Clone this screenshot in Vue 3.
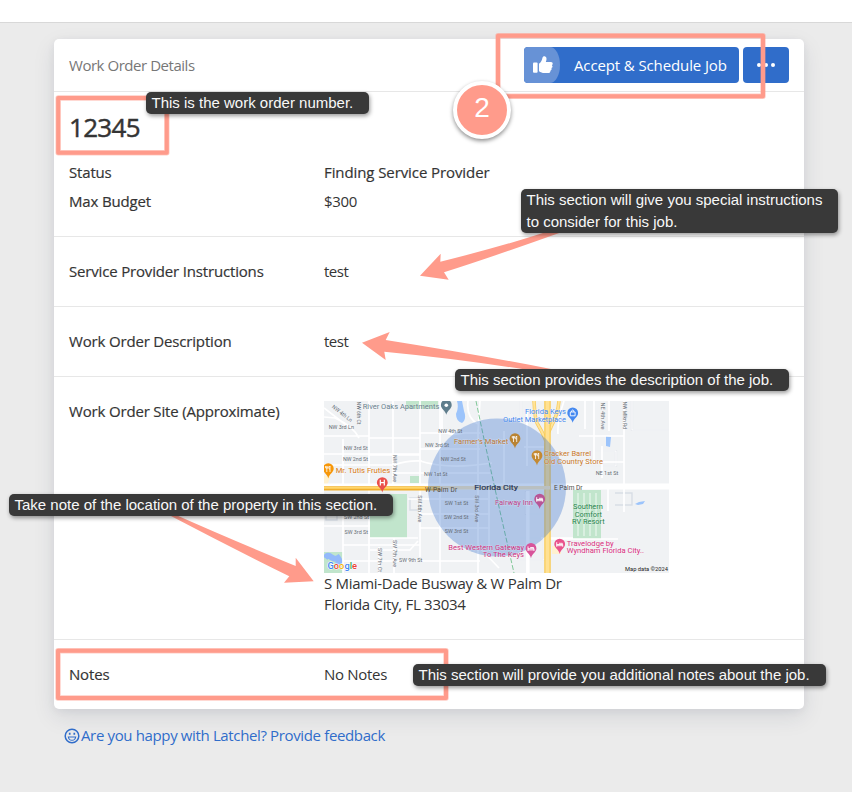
<script setup>
const details = [
  { label: 'Status', value: 'Finding Service Provider', strong: true },
  { label: 'Max Budget', value: '$300', strong: false },
]

const streets = [
  ['NW 3rd Ln', 4.7, 28.3, 25.3], ['NW 4th St', 114.3, 32, 24], ['NW 3rd St', 19.7, 49.3, 24],
  ['NW 2nd St', 19, 60, 25], ['NW 3rd St', 101, 46, 24], ['NW 2nd St', 116.7, 60.3, 25],
  ['NW 1st St', 100, 74.7, 23.5], ['NE 1st St', 271.7, 73.7, 22.5], ['SW 1st St', 120.7, 103.7, 23.5],
  ['SW 2nd St', 120, 117.7, 24.5], ['SW 3rd St', 120.7, 131.7, 23.5], ['SW 2nd St', 20, 118.3, 25],
  ['SW 3rd St', 20.5, 133, 23.5], ['SW 9th St', 75, 160.7, 23.3],
  ['NW 4th Ln', 7.5, 6.5, 24, 38], ['NW 6th Ct', 32.5, 0.5, 23, 90], ['NW 7th Ave', 68.5, 54, 27, 90],
  ['NE 4th Ave', 277, 1.5, 27, 90], ['NW Mlkn Rd', 298.5, 0.5, 27.5, 90], ['SW 6th Ave', 93.5, 94.3, 27, 90],
  ['SW 3rd Ave', 151, 94.3, 27, 90], ['SW 7th Ave', 68.5, 139, 27, 90], ['SW 7th Ct', 53.5, 147, 24, 90],
]

const places = [
  ['River Oaks Apartments', 38.7, 7.7, 76.6, '#68808d'],
  ["Farmer's Market", 130, 42.7, 54.3, '#b87534'],
  ['Mr. Tutis Fruties', 11.7, 72, 54.5, '#d97a14'],
  ['Florida Keys', 201, 13.3, 41, '#3f86ee'],
  ['Outlet Marketplace', 179, 20.7, 63, '#3f86ee'],
  ['Cracker Barrel', 220, 55.3, 47, '#c9782a'],
  ['Old Country Store', 220, 63, 59, '#c9782a'],
  ['Fairway Inn', 171, 103.7, 38, '#bb4189'],
  ['Southern', 249, 108.3, 30, '#23824a'],
  ['Comfort', 250.7, 115.8, 27.3, '#23824a'],
  ['RV Resort', 248, 123.2, 32.7, '#23824a'],
  ['Travelodge by', 242.7, 144.7, 47, '#d92e7e'],
  ['Wyndham Florida City..', 242.7, 152.3, 77.3, '#d92e7e'],
  ['Best Western Gateway', 124.3, 148.8, 75.7, '#cf2f80'],
  ['To The Keys', 158.7, 156.2, 41.3, '#cf2f80'],
]

const pins = [
  { x: 122.3, y: 4.3, color: '#5f7d8c', kind: 'dot' },
  { x: 4.3, y: 68, color: '#f79708', kind: 'food' },
  { x: 58.3, y: 82, color: '#ea4f4a', kind: 'hospital' },
  { x: 248.7, y: 12.3, color: '#4589f0', kind: 'shop' },
  { x: 191, y: 38, color: '#b98333', kind: 'food' },
  { x: 213, y: 55, color: '#c48a32', kind: 'food' },
  { x: 215.7, y: 98.5, color: '#b85596', kind: 'bed' },
  { x: 207, y: 147.7, color: '#d8549a', kind: 'bed' },
  { x: 235.7, y: 143.5, color: '#e9528c', kind: 'bed' },
]

const tips = [
  { id: 'number', lines: ['This is the work order number.'] },
  { id: 'instructions', lines: ['This section will give you special instructions', 'to consider for this job.'] },
  { id: 'description', lines: ['This section provides the description of the job.'] },
  { id: 'location', lines: ['Take note of the location of the property in this section.'] },
  { id: 'notes', lines: ['This section will provide you additional notes about the job.'] },
]
</script>

<template>
  <div class="page">
    <div class="topbar"></div>
    <main class="card">
      <header class="card-head">
        <span class="title">Work Order Details</span>
        <div class="actions">
          <button class="btn accept">
            <span class="thumb">
              <svg width="20" height="18" viewBox="0 0 20 18" fill="#fff">
                <rect x="0" y="6.6" width="4.6" height="10.2" rx="1" />
                <path d="M6 7.8 C8.3 6 9 4.3 9.4 2 C9.7 .5 10.8 0 11.8 .3 C14 1 13.8 3.7 12.8 6.1 H18 C19.8 6.2 20.3 8.3 18.9 9.2 C20 10.3 19.6 11.7 18.4 12.1 C19 13.4 18.4 14.4 17.3 14.7 C17.6 16.2 16.8 17.1 15.3 17.1 H11.5 C9.3 17.1 7.8 16.2 6 15.2Z" />
              </svg>
            </span>
            <span class="accept-label">Accept &amp; Schedule Job</span>
          </button>
          <button class="btn more" aria-label="More"><i></i><i></i><i></i></button>
        </div>
      </header>

      <section class="summary">
        <h1>12345</h1>
        <div v-for="d in details" :key="d.label" class="row">
          <span class="label">{{ d.label }}</span>
          <span :class="{ label: d.strong, status: d.strong }">{{ d.value }}</span>
        </div>
      </section>
      <section class="row block">
        <span class="label">Service Provider Instructions</span><span class="short">test</span>
      </section>
      <section class="row block">
        <span class="label">Work Order Description</span><span class="short">test</span>
      </section>
      <section class="row block">
        <span class="label">Work Order Site (Approximate)</span>
        <div class="site">
          <svg class="map" width="345" height="172" viewBox="0 0 345 172">
            <rect width="345" height="172" fill="#f0f2f4" />
            <path fill="#c1e5cc" d="M82 0h32v8H82zM86 75h9v7h-9zM46 93h37v44H46zM0 151h19v21H0z" />
            <path fill="#c1e5cc" d="M249 89h28v49h-28z" />
            <path d="M254 92v43M260 92v43M266 92v43M272 92v43" stroke="#e9f6ed" stroke-width="1.2" />
            <path fill="#9cc4fb" d="M133 0h5q1 5 2 10q3 8-2 12q-6-2-6-9q3-6 1-13zM282 35l5 1-1 10-4-1zM311 103l4-2 6-1-2 3-5 1z" />
            <path d="M1 157q3-4 6-1q4 3 7 1q3 4-1 7" fill="none" stroke="#93b9fa" stroke-width="6" />
            <path fill="#fff1cf" d="M0 75h7l-4 9H0zM228 145h9v8h-9z" />
            <g fill="none" stroke="#d8dee5" stroke-width="1.4">
              <path d="M2 104h11v15H2zM86 97h9v12h-9zM291 92h17v12h-17" />
            </g>
            <g fill="none" stroke="#dfe3e8" stroke-width="2.2">
              <path d="M308 0v29h37M262 50h30v15h-36M197 0v31M198 57h23v28M196 137h24v22h-24M202 91h22v22h-22z" />
            </g>
            <g fill="none" stroke="#fff" stroke-width="1.7">
              <path d="M308 0v29h37M262 50h30v15h-36M197 0v31M198 57h23v28M196 137h24v22h-24M202 91h22v22h-22z" stroke-width="1.1" />
              <path d="M0 16l11 1q18 8 24 20M0 35h45V0M22 24L0 7M45 0v84M96 0v84M69 0v84M19 38v46M45 37h51M45 54h51M0 53h96M0 64h70q14-5 28-4M70 72h96M96 48h60M96 32h60M116 0v172M156 0l-2 30V172M96 88v68M45 89v83M19 94v78M0 98h46M19 110h26M0 125h46M19 144h77M46 137h48M19 160h137M55 146v26M70 137v35M84 98h80M96 113h70M96 127h70M165 86v64M180 30v55M203 10v55M203 90v82M217 137h32M200 46h22M240 0q-7 20-6 33M300 0v85M261 0v28M270 0v60M285 0v30M255 35h45M258 61h42M278 45v32M284 88v22M300 88v23M227 138h67" />
              <path d="M96 60q28 9 72 2M144 0q-2 17 10 23M154 145l21 22M118 0v28q5 8 22 4M46 149l40 0 8-9" />
            </g>
            <path d="M0 85.5H345" stroke="#fff" stroke-width="6" />
            <path d="M204 90v82" stroke="#fff" stroke-width="3.2" />
            <g fill="none">
              <path d="M210 0q1 18 3 22q5 8 9 18M235 0q-1 13-8 26q-6 10-5 28" stroke="#f7cc60" stroke-width="3.5" />
              <path d="M210 0q1 18 3 22q5 8 9 18M235 0q-1 13-8 26q-6 10-5 28" stroke="#ffe49a" stroke-width="2" />
              <path d="M223.5 0v172" stroke="#f8cb57" stroke-width="6.5" />
              <path d="M223.5 0v172" stroke="#ffe193" stroke-width="4" />
              <path d="M0 87.3H118" stroke="#efad2b" stroke-width="4.2" />
              <path d="M0 86.8H130" stroke="#ffd66a" stroke-width="2" />
              <path d="M116 86.8H226" stroke="#fde9bb" stroke-width="3.5" />
            </g>
            <path d="M152 0l8 38 15 68 15 66" stroke="#65bd80" stroke-width=".8" stroke-dasharray="5 2" fill="none" />
            <circle cx="173" cy="86.5" r="69" fill="#3973cc" fill-opacity=".34" />
            <g class="street">
              <text v-for="([t, x, y, w, r], i) in streets" :key="i" :textLength="w" lengthAdjust="spacingAndGlyphs" :transform="`translate(${x} ${y}) rotate(${r || 0})`">{{ t }}</text>
              <text x="101" y="90.7" textLength="32.3" class="palm">W Palm Dr</text>
              <text x="230" y="88.7" textLength="28.5" class="palm">E Palm Dr</text>
            </g>
            <text v-for="([t, x, y, w, c]) in places" :key="t" class="place" :x="x" :y="y" :textLength="w" lengthAdjust="spacingAndGlyphs" :fill="c">{{ t }}</text>
            <text class="city" x="150.3" y="88.6" textLength="43.5" lengthAdjust="spacingAndGlyphs">Florida City</text>
            <g v-for="p in pins" :key="p.x" :transform="`translate(${p.x} ${p.y})`">
              <path d="M0 9.5C-1 5-5.4 3.6-5.4-.4a5.4 5.4 0 0 1 10.8 0C5.4 3.6 1 5 0 9.5Z" :fill="p.color" />
              <circle v-if="p.kind === 'dot'" r="1.8" fill="#fff" />
              <path v-else-if="p.kind === 'hospital'" d="M-2-3.2V2.6M2-3.2V2.6M-2-.3H2" stroke="#fff" stroke-width="1.2" />
              <path v-else-if="p.kind === 'food'" d="M-1.5-3V3M-2.7-3v2h2.4v-2M1.7 3V-3q-1.3 1-1 3h1" stroke="#fff" stroke-width=".8" fill="none" />
              <path v-else-if="p.kind === 'shop'" d="M-2.4-1.3h4.8v3.8h-4.8zM-1.2-1.3q0-2 1.2-2t1.2 2" stroke="#fff" stroke-width=".9" fill="none" />
              <path v-else d="M-3-2.3v4.5M3 2.2V0H-3M-3 1.2h6M-.8-1.2H2.6V0" stroke="#fff" stroke-width=".9" fill="none" />
            </g>
            <text class="google" x="3.5" y="168" textLength="29.5" lengthAdjust="spacingAndGlyphs"><tspan fill="#4285f4">G</tspan><tspan fill="#ea4335">o</tspan><tspan fill="#f4b400">o</tspan><tspan fill="#4285f4">g</tspan><tspan fill="#34a853">l</tspan><tspan fill="#ea4335">e</tspan></text>
            <text class="credit" x="301" y="169.7" textLength="43" lengthAdjust="spacingAndGlyphs">Map data ©2024</text>
          </svg>
          <div class="address">
            <div>S Miami-Dade Busway &amp; W Palm Dr</div>
            <div>Florida City, FL 33034</div>
          </div>
        </div>
      </section>
      <section class="row block last">
        <span class="label">Notes</span><span>No Notes</span>
      </section>
    </main>
    <a class="feedback">
      <svg width="16" height="16" viewBox="0 0 16 16" fill="none" stroke="#306dca" stroke-width="1.5">
        <circle cx="8" cy="8" r="6.8" />
        <path d="M4.3 9h7.4q-.7 3.3-3.7 3.3T4.3 9Z" stroke-width="1.1" />
        <path d="M5.7 4.8v2M10.3 4.8v2" stroke-width="1.7" />
      </svg>
      <span>Are you happy with Latchel? Provide feedback</span>
    </a>

    <svg class="marks" width="852" height="792" viewBox="0 0 852 792">
      <g v-for="w in [5.4, 4]" :key="w" fill="none" stroke="#ff9b8b" :stroke-width="w" :stroke-opacity="w === 4 ? 1 : 0.5" stroke-linejoin="round">
        <rect x="58.2" y="98" width="108.6" height="54.8" />
        <rect x="498" y="35.8" width="265" height="60.4" />
        <rect x="58" y="650.8" width="388" height="47.2" />
      </g>
      <g fill="#ff9b8b">
        <path d="M420 275.7 440.7 253.7 440.3 261.7Q500 247 546 232H562Q495 256 444 272.3L448.7 279.7Z" />
        <path d="M362 342.7 389.7 332 385.7 340Q480 355 556 370H528Q460 359 384.3 351.7L385.7 360Z" />
        <path d="M169 515H176Q230 539 295.7 566V557.7L313.7 581.3 284 582.7 289.3 576.3Q230 547 169 515Z" />
      </g>
    </svg>
    <div class="badge"><span>2</span></div>
    <div v-for="t in tips" :key="t.id" class="tip" :class="t.id">
      <div v-for="l in t.lines" :key="l">{{ l }}</div>
    </div>
  </div>
</template>

<style>
body { background: #ebebeb; }
</style>

<style scoped>
.page { position: relative; height: 792px; overflow: hidden; background: #ebebeb; color: #343434; font: 400 15px/21px "Open Sans", sans-serif; letter-spacing: -.3px; white-space: nowrap; }
.topbar { height: 22px; background: #fff; border-bottom: 1px solid #d8d8d8; }
.card { width: 750px; margin: 16px 0 0 54px; background: #fff; border-radius: 5px; box-shadow: 0 8px 22px rgba(30, 40, 70, .1), 0 2px 8px rgba(30, 40, 70, .06); }
.card-head { height: 52px; display: flex; align-items: center; justify-content: space-between; padding: 0 15px; border-bottom: 1px solid #e7e7e7; }
.title { color: #777; letter-spacing: -.46px; }
.actions { display: flex; gap: 4px; }
.btn { height: 36px; padding: 0; border: 0; border-radius: 4px; background: #306dca; color: #fff; font: inherit; letter-spacing: inherit; display: flex; align-items: center; overflow: hidden; }
.accept { width: 215px; }
.thumb { width: 36px; height: 36px; padding-left: 9px; box-sizing: border-box; display: flex; align-items: center; background: #6792d6; border-radius: 0 10px 10px 0 / 0 18px 18px 0; }
.accept-label { margin-left: 14px; letter-spacing: -.12px; }
.more { width: 46px; justify-content: center; gap: 3px; }
.more i { width: 4px; height: 4px; border-radius: 50%; background: #fff; }
section { border-bottom: 1px solid #e7e7e7; }
.summary { padding: 18px 15px 0; height: 126px; }
h1 { margin: 0 0 18px; font-size: 26px; line-height: 34px; font-weight: 400; letter-spacing: -.7px; -webkit-text-stroke: .45px #343434; }
.row { display: grid; grid-template-columns: 255px 1fr; }
.summary .row { height: 21px; margin-bottom: 8px; }
.label { letter-spacing: -.17px; -webkit-text-stroke: .18px #343434; }
.status { letter-spacing: -.09px; }
.short { letter-spacing: -.5px; }
.block { padding: 24px 15px; }
.last { border: 0; }
.map { display: block; }
.street { font: 5.6px Roboto, sans-serif; fill: #666d75; letter-spacing: 0; }
.palm { font-size: 6.5px; fill: #4d4a48; }
.place { font: 400 7.5px Roboto, sans-serif; letter-spacing: 0; stroke: #fff; stroke-opacity: .35; stroke-width: .8px; paint-order: stroke; }
.city { font: 400 8px Roboto, sans-serif; fill: #293a5e; stroke: #293a5e; stroke-width: .2px; letter-spacing: 0; }
.google { font: 500 9.5px Roboto, sans-serif; letter-spacing: 0; stroke: #fff; stroke-width: 1px; paint-order: stroke; }
.credit { font: 6px Roboto, sans-serif; fill: #222; letter-spacing: 0; }
.feedback { display: inline-flex; align-items: center; margin: 16px 0 0 64px; color: #306dca; letter-spacing: -.36px; }
.feedback span { margin-left: 1px; }
.marks { position: absolute; left: 0; top: 0; }
.badge { position: absolute; left: 453px; top: 81px; width: 50px; height: 50px; border: 4px solid #fff; border-radius: 50%; background: #ff9b8b; color: #fff; box-shadow: 0 2px 4px rgba(0, 0, 0, .45); font: 28px/46px "Liberation Sans", sans-serif; text-align: center; }
.tip { position: absolute; box-sizing: border-box; padding-left: 5.5px; border-radius: 5px; background: #393939; color: #f8f8f8; font: 15px/22px "Liberation Sans", sans-serif; letter-spacing: 0; box-shadow: 1px 2px 4px rgba(0, 0, 0, .4); }
.number { left: 146px; top: 92px; width: 223px; }
.instructions { left: 521px; top: 189px; width: 317px; }
.description { left: 455px; top: 369px; width: 334px; }
.location { left: 9px; top: 494px; width: 384px; }
.notes { left: 413px; top: 664px; width: 413px; }
</style>
